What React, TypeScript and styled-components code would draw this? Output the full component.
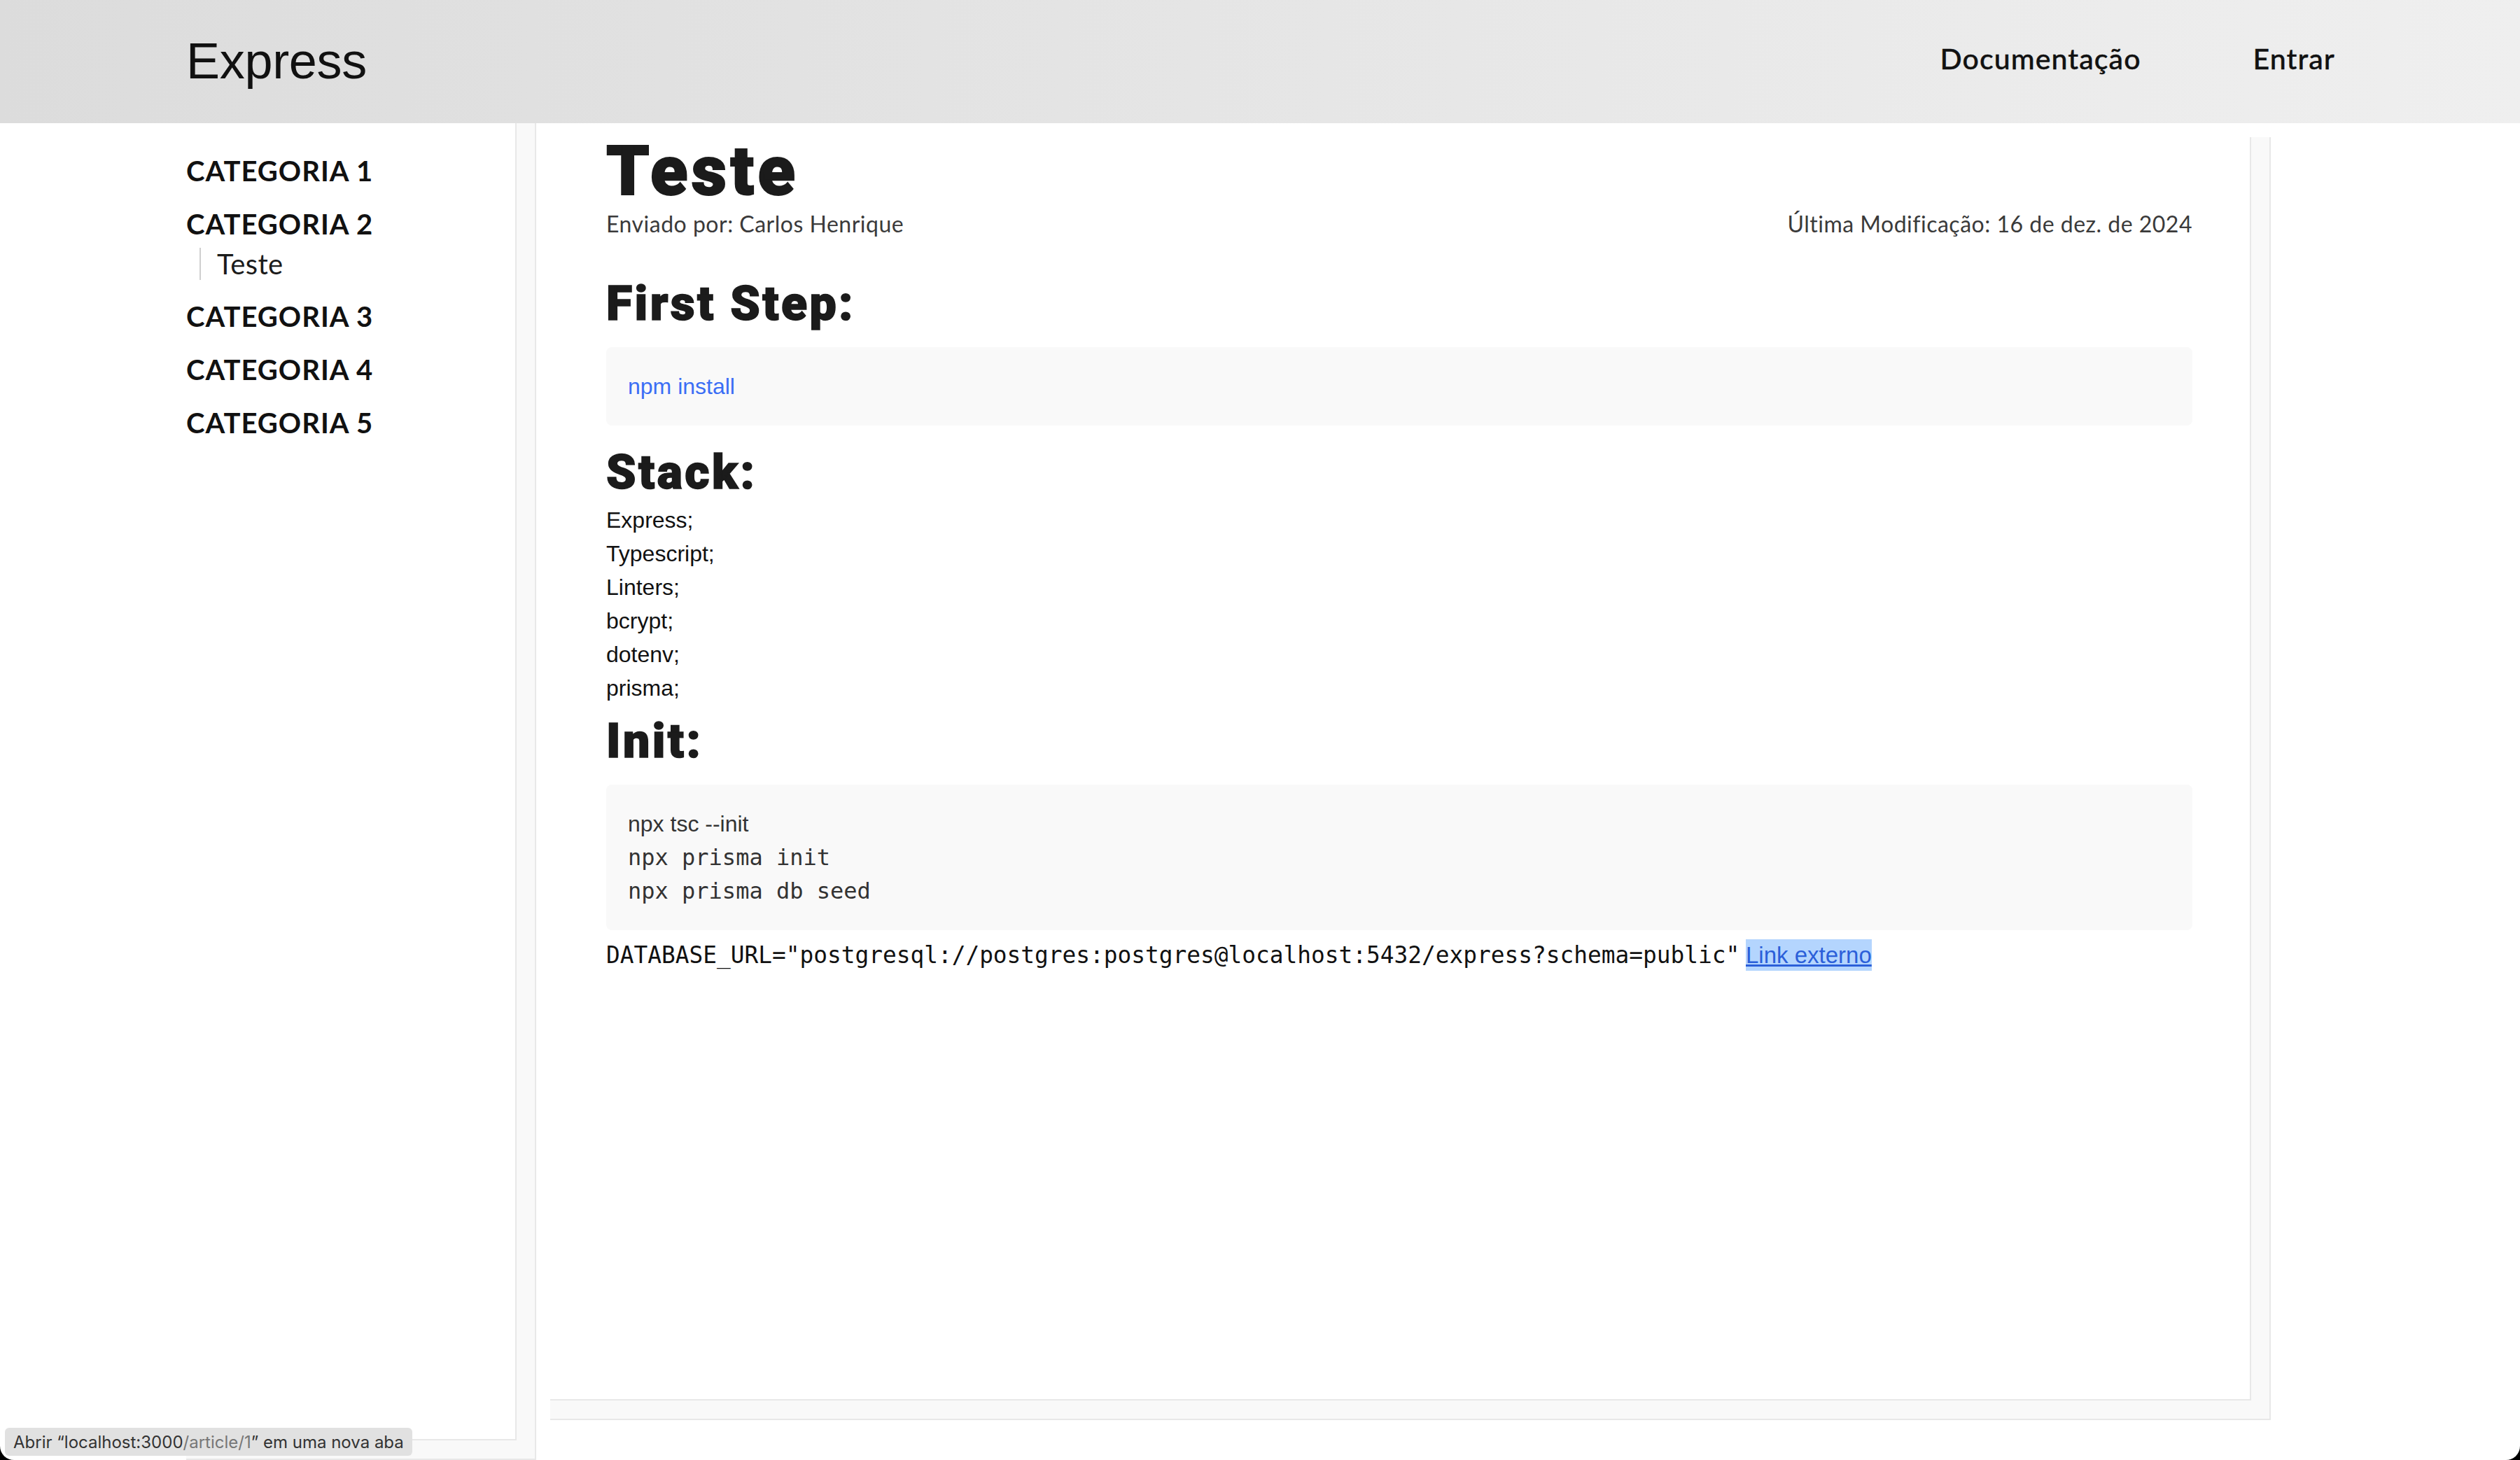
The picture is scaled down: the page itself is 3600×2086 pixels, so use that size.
import React from "react";
import styled, { createGlobalStyle } from "styled-components";

const GlobalStyle = createGlobalStyle`
  html, body { margin: 0; padding: 0; background: #000; }
  body { font-family: "Liberation Sans", Arial, sans-serif; color: #1b1b1b; }
  * { box-sizing: border-box; }
`;

const Page = styled.div`
  position: relative;
  height: 100vh;
  background: #fff;
  border-radius: 0 0 20px 20px;
  overflow: hidden;
  display: flex;
  flex-direction: column;
`;

const Header = styled.header`
  height: 176px;
  flex: none;
  background: linear-gradient(90deg, #dcdcdc 0%, #efefef 100%);
  display: flex;
  align-items: center;
  justify-content: space-between;
  padding: 0 264px 0 266px;
`;

const Logo = styled.div`
  font-family: "Liberation Sans", Arial, sans-serif;
  font-size: 72px;
  color: #111;
  letter-spacing: -0.3px;
  margin-bottom: 3px;
`;

const Nav = styled.nav`
  display: flex;
  gap: 160px;
  margin-bottom: 9px;
`;

const NavLink = styled.a`
  font-family: Lato, "Noto Sans", sans-serif;
  font-size: 41px;
  font-weight: 500;
  letter-spacing: 1.1px;
  color: #111;
  text-decoration: none;
  -webkit-text-stroke: 0.4px #111;
`;

const Main = styled.div`
  flex: 1;
  min-height: 0;
  display: flex;
  align-items: flex-start;
  gap: 20px;
  padding-left: 266px;
`;

const Frame = styled.div<{ $w: number; $top: number; $h: string }>`
  width: ${(p) => p.$w}px;
  height: ${(p) => p.$h};
  margin-top: ${(p) => p.$top}px;
  flex: none;
  display: flex;
  background: #f9f9f9;
  border-right: 2px solid #e8e8e8;
  border-bottom: 2px solid #e8e8e8;
  padding: 0 26px 26px 0;
`;

const Panel = styled.div<{ $pad: string }>`
  flex: 1;
  background: #fff;
  border-right: 2px solid #e8e8e8;
  border-bottom: 2px solid #e8e8e8;
  padding: ${(p) => p.$pad};
  display: flex;
  flex-direction: column;
`;

const CategoryList = styled.ul`
  list-style: none;
  margin: 0;
  padding: 0;
  display: flex;
  flex-direction: column;
  gap: 28px;
`;

const CategoryTitle = styled.a`
  display: block;
  font-family: Lato, "Noto Sans", sans-serif;
  font-weight: 700;
  font-size: 40px;
  line-height: 48px;
  letter-spacing: 1px;
  color: #111;
  text-decoration: none;
`;

const SubList = styled.ul`
  list-style: none;
  margin: 10px 0 0 19px;
  padding: 0 0 0 23px;
  border-left: 2px solid #cfcfcf;
`;

const SubItem = styled.a`
  display: block;
  font-family: Lato, "Noto Sans", sans-serif;
  font-size: 40px;
  line-height: 46px;
  letter-spacing: 0.4px;
  color: #1b1b1b;
  text-decoration: none;
`;

const Title = styled.h1`
  margin: 0;
  font-family: Roboto, "Liberation Sans", sans-serif;
  font-weight: 900;
  font-size: 98px;
  line-height: 1;
  letter-spacing: 0.055em;
  color: #1b1b1b;
  -webkit-text-stroke: 2px #1b1b1b;
`;

const Meta = styled.div`
  display: flex;
  justify-content: space-between;
  margin-top: 6px;
  font-family: Lato, "Noto Sans", sans-serif;
  font-size: 32px;
  letter-spacing: 0.5px;
  line-height: 40px;
  color: #3a3a3a;
`;

const Heading = styled.h2<{ $top: number }>`
  margin: ${(p) => p.$top}px 0 0;
  font-family: Roboto, "Liberation Sans", sans-serif;
  font-weight: 900;
  font-size: 68px;
  line-height: 1;
  letter-spacing: 0.05em;
  color: #1b1b1b;
  -webkit-text-stroke: 1.5px #1b1b1b;
`;

const CodeBlock = styled.pre<{ $top: number }>`
  margin: ${(p) => p.$top}px 0 0;
  padding: 32px 31px;
  background: #f9f9f9;
  border-radius: 8px;
  font-size: 32px;
  line-height: 48px;
  white-space: pre;
`;

const Sans = styled.span<{ $color?: string }>`
  display: block;
  font-family: "Liberation Sans", Arial, sans-serif;
  color: ${(p) => p.$color ?? "#333"};
`;

const Mono = styled.span`
  display: block;
  font-family: "DejaVu Sans Mono", "Liberation Mono", monospace;
  font-size: 32px;
  color: #333;
`;

const StackList = styled.div`
  margin-top: 10px;
  font-family: "Liberation Sans", Arial, sans-serif;
  font-size: 32px;
  line-height: 48px;
  color: #111;
`;

const EnvLine = styled.p`
  margin: 12px 0 0;
  line-height: 48px;
  font-size: 32px;
`;

const EnvCode = styled.span`
  font-family: "DejaVu Sans Mono", "Liberation Mono", monospace;
  font-size: 32.8px;
  color: #111;
`;

const ExternalLink = styled.a`
  font-family: "Liberation Sans", Arial, sans-serif;
  font-size: 33px;
  color: #2b5fd9;
  text-decoration: underline;
  background: #b4d5fe;
  padding: 4px 0;
`;

const StatusTip = styled.div`
  position: absolute;
  left: 7px;
  bottom: 6px;
  height: 40px;
  padding: 0 12px;
  display: flex;
  align-items: center;
  background: #e1e1e1;
  border-radius: 6px;
  font-family: Inter, "Liberation Sans", sans-serif;
  font-size: 24px;
  color: #333;
`;

const Dim = styled.span`
  color: #777;
`;

const categories = [
  { name: "CATEGORIA 1", items: [] as string[] },
  { name: "CATEGORIA 2", items: ["Teste"] },
  { name: "CATEGORIA 3", items: [] },
  { name: "CATEGORIA 4", items: [] },
  { name: "CATEGORIA 5", items: [] },
];

const stack = ["Express;", "Typescript;", "Linters;", "bcrypt;", "dotenv;", "prisma;"];

export default function App() {
  return (
    <Page>
      <GlobalStyle />
      <Header>
        <Logo>Express</Logo>
        <Nav>
          <NavLink href="#">Documentação</NavLink>
          <NavLink href="#">Entrar</NavLink>
        </Nav>
      </Header>
      <Main>
        <Frame $w={500} $top={0} $h="100%">
          <Panel $pad="44px 0 0 0">
            <CategoryList>
              {categories.map((c) => (
                <li key={c.name}>
                  <CategoryTitle href="#">{c.name}</CategoryTitle>
                  {c.items.length > 0 && (
                    <SubList>
                      {c.items.map((i) => (
                        <li key={i}>
                          <SubItem href="#">{i}</SubItem>
                        </li>
                      ))}
                    </SubList>
                  )}
                </li>
              ))}
            </CategoryList>
          </Panel>
        </Frame>
        <Frame $w={2458} $top={20} $h="1833px">
          <Panel $pad="0 82px 0 80px">
            <Title>Teste</Title>
            <Meta>
              <span>Enviado por: Carlos Henrique</span>
              <span>Última Modificação: 16 de dez. de 2024</span>
            </Meta>
            <Heading $top={60}>First Step:</Heading>
            <CodeBlock $top={28}>
              <Sans $color="#3b6ef5">npm install</Sans>
            </CodeBlock>
            <Heading $top={33}>Stack:</Heading>
            <StackList>
              {stack.map((s) => (
                <div key={s}>{s}</div>
              ))}
            </StackList>
            <Heading $top={18}>Init:</Heading>
            <CodeBlock $top={28}>
              <Sans>npx tsc --init</Sans>
              <Mono>npx prisma init</Mono>
              <Mono>npx prisma db seed</Mono>
            </CodeBlock>
            <EnvLine>
              <EnvCode>DATABASE_URL="postgresql://postgres:postgres@localhost:5432/express?schema=public"</EnvCode>{" "}
              <ExternalLink href="#">Link externo</ExternalLink>
            </EnvLine>
          </Panel>
        </Frame>
      </Main>
      <StatusTip>
        Abrir “localhost:3000<Dim>/article/1</Dim>” em uma nova aba
      </StatusTip>
    </Page>
  );
}
